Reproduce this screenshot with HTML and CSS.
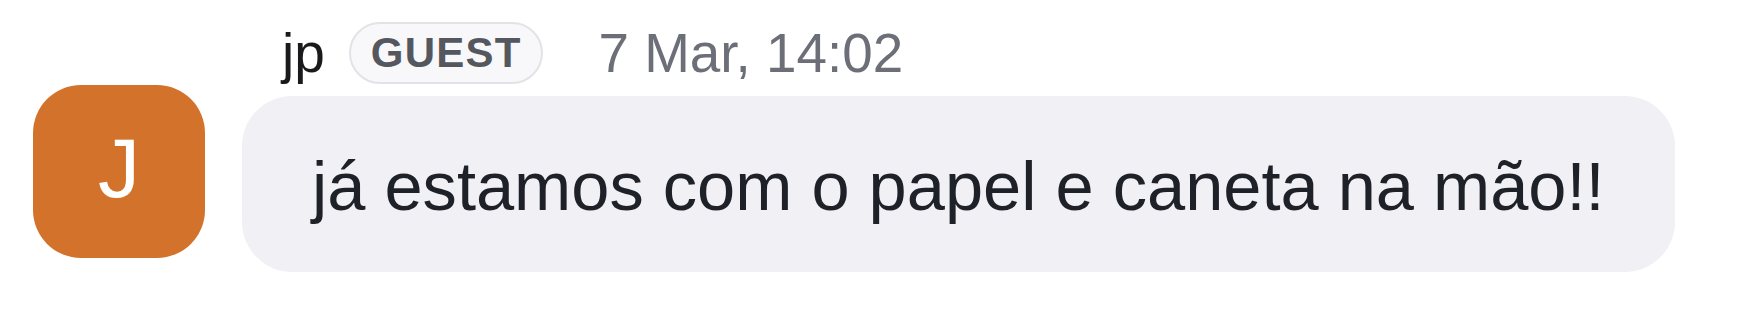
FILE: index.html
```html
<!DOCTYPE html>
<html lang="pt-BR">
<head>
    <meta charset="UTF-8">
    <meta name="viewport" content="width=device-width, initial-scale=1.0">
    <title>Mensagem</title>
    <link rel="stylesheet" href="styles.css">
</head>
<body>
    <div class="message">
        <div class="meta">
            <span class="author">jp</span>
            <span class="badge">GUEST</span>
            <span class="time">7 Mar, 14:02</span>
        </div>
        <div class="avatar">J</div>
        <div class="bubble">já estamos com o papel e caneta na mão!!</div>
    </div>
</body>
</html>
```

FILE: styles.css
```css
:root {
    --avatar: #d2722b;
    --bubble: #f1f1f5;
    --text: #1f2128;
    --muted: #6c6f78;
    --badge-text: #54575d;
    --badge-border: #e2e3e7;
}

body {
    margin: 0;
    background: white;
    font-family: "Liberation Sans", Arial, sans-serif;
    color: var(--text);
}

.message {
    display: grid;
    grid-template-columns: 172px auto;
    column-gap: 37px;
    row-gap: 1px;
    justify-content: start;
    padding: 22px 0 0 33px;
}

.meta {
    grid-column: 2;
    display: flex;
    align-items: center;
    height: 62px;
    padding-left: 40px;
}

.author {
    font-size: 55px;
    line-height: 63px;
    color: #1a1a1d;
}

.badge {
    margin-left: 24px;
    padding: 8px 19px 8px 20px;
    border: 2px solid var(--badge-border);
    border-radius: 40px;
    background: #f8f8fa;
    color: var(--badge-text);
    font-size: 42px;
    font-weight: bold;
    line-height: 42px;
    letter-spacing: 1.2px;
}

.time {
    margin-left: 56px;
    font-size: 54.8px;
    line-height: 62px;
    color: var(--muted);
}

.avatar {
    grid-column: 1;
    width: 172px;
    height: 173px;
    border-radius: 48px;
    background: var(--avatar);
    color: white;
    font-size: 84px;
    display: flex;
    align-items: center;
    justify-content: center;
    box-sizing: border-box;
    padding-bottom: 6px;
}

.bubble {
    grid-column: 2;
    justify-self: start;
    margin-top: 11px;
    padding: 50px 70px 44px 70px;
    background: var(--bubble);
    border-radius: 50px;
    font-size: 68.6px;
    line-height: 1.2;
    white-space: nowrap;
}
```
